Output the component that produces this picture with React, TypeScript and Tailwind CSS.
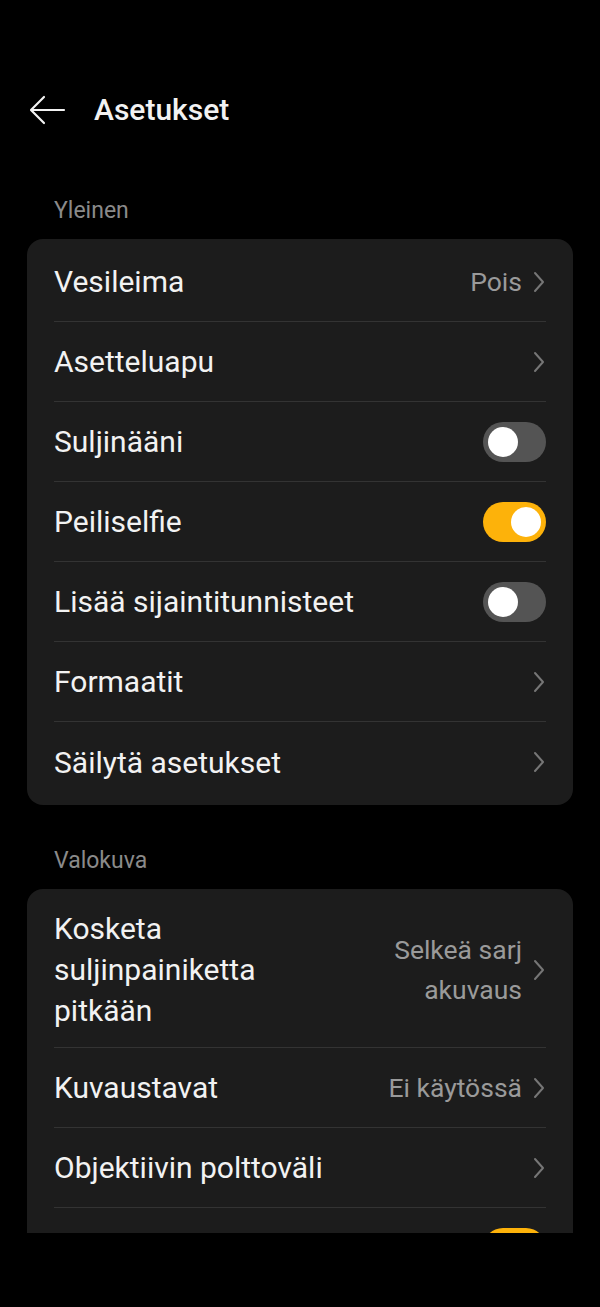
import type { ReactNode } from 'react';

function Chevron() {
  return (
    <svg width="14" height="22" viewBox="0 0 14 22" fill="none" className="shrink-0">
      <path d="M3 2 L11 11 L3 20" stroke="#767676" strokeWidth="2" strokeLinecap="round" strokeLinejoin="round" />
    </svg>
  );
}

function Toggle({ on }: { on: boolean }) {
  return (
    <div
      className={`w-[63px] h-[40px] rounded-full flex items-center px-[5px] shrink-0 ${
        on ? 'bg-[#fdb20a] justify-end' : 'bg-[#545454] justify-start'
      }`}
    >
      <div className="w-[30px] h-[30px] rounded-full bg-white" />
    </div>
  );
}

interface RowProps {
  label?: ReactNode;
  value?: ReactNode;
  right?: 'chevron' | 'on' | 'off';
  last?: boolean;
  tall?: boolean;
}

function Row({ label, value, right = 'chevron', last = false, tall = false }: RowProps) {
  return (
    <div className="px-[27px]">
      <div
        className={`flex items-center justify-between ${tall ? 'py-[16px]' : 'h-[80px]'} ${
          last ? '' : 'border-b border-[#333333]'
        }`}
      >
        <div className="text-[30px] leading-[41px] text-[#f2f2f2]">{label}</div>
        <div className="flex items-center gap-[10px]">
          {value && <div className="text-[26.5px] leading-[40px] text-[#9a9a9a] text-right">{value}</div>}
          {right === 'chevron' && <Chevron />}
          {right === 'on' && <Toggle on />}
          {right === 'off' && <Toggle on={false} />}
        </div>
      </div>
    </div>
  );
}

function Section({ title, children }: { title: string; children: ReactNode }) {
  return (
    <div>
      <div className="px-[54px] text-[23px] text-[#8a8a8a] h-[56px] flex items-center">{title}</div>
      <div className="mx-[27px] bg-[#1c1c1c] rounded-[16px] py-[3px]">{children}</div>
    </div>
  );
}

export default function App() {
  return (
    <div className="w-[600px] h-[1307px] bg-black overflow-hidden" style={{ fontFamily: 'Roboto, "Noto Sans", sans-serif' }}>
      <div className="h-[1233px] overflow-hidden">
        <div className="h-[183px] relative">
          <div className="absolute left-[28px] top-[94px] flex items-center">
            <svg width="38" height="32" viewBox="0 0 38 32" fill="none">
              <path d="M36 16 H4 M16 3 L3 16 L16 29" stroke="#f2f2f2" strokeWidth="2.2" strokeLinecap="round" strokeLinejoin="round" />
            </svg>
          </div>
          <div className="absolute left-[94px] top-[90px] text-[30px] leading-[40px] text-[#f2f2f2] font-medium">
            Asetukset
          </div>
        </div>
        <Section title="Yleinen">
          <Row label="Vesileima" value="Pois" />
          <Row label="Asetteluapu" />
          <Row label="Suljinääni" right="off" />
          <Row label="Peiliselfie" right="on" />
          <Row label="Lisää sijaintitunnisteet" right="off" />
          <Row label="Formaatit" />
          <Row label="Säilytä asetukset" last />
        </Section>
        <div className="h-[28px]" />
        <Section title="Valokuva">
          <Row
            tall
            label={
              <>
                Kosketa
                <br />
                suljinpainiketta
                <br />
                pitkään
              </>
            }
            value={
              <>
                Selkeä sarj
                <br />
                akuvaus
              </>
            }
          />
          <Row label="Kuvaustavat" value="Ei käytössä" />
          <Row label="Objektiivin polttoväli" />
          <Row right="on" last />
        </Section>
      </div>
    </div>
  );
}
